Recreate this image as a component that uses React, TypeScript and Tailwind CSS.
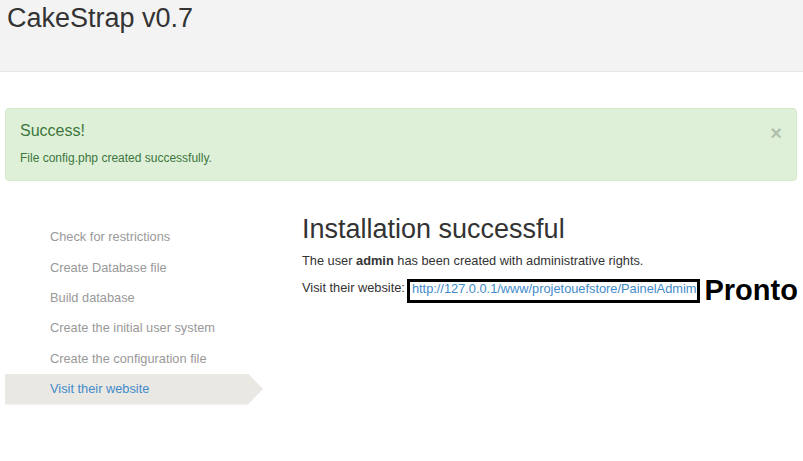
const steps = [
  "Check for restrictions",
  "Create Database file",
  "Build database",
  "Create the initial user system",
  "Create the configuration file",
  "Visit their website",
]

export default function App() {
  const active = steps.length - 1
  return (
    <div className="min-h-screen bg-white font-['Liberation_Sans',Arial,sans-serif] text-[#333]">
      <header className="h-[72px] border-b border-[#e5e5e5] bg-[#f3f3f3] px-[7px] pt-[4px]">
        <h1 className="text-[27px] font-normal leading-[1.1]">CakeStrap v0.7</h1>
      </header>

      <div className="ml-[5px] mr-[6px] mt-[36px] flex justify-between rounded-[4px] border border-[#d6e9c6] bg-[#dff0d8] px-[14px] pt-[13px] pb-[13px] text-[#3c763d]">
        <div>
          <h4 className="text-[16px] leading-[17.6px]">Success!</h4>
          <p className="mt-[10px] text-[12px] leading-[17px]">File config.php created successfully.</p>
        </div>
        <span className="mt-[1px] text-[20px] font-bold leading-none text-black opacity-20">×</span>
      </div>

      <div className="mt-[34px] flex">
        <ul className="ml-[5px] w-[258px] pt-[7px] text-[12.8px]">
          {steps.map((s, i) => (
            <li
              key={s}
              className={
                i === active
                  ? "flex h-[31px] items-center bg-[#eae8e3] pl-[45px] text-[#428bca] [clip-path:polygon(0_0,243px_0,100%_50%,243px_100%,0_100%)]"
                  : "flex h-[30.4px] items-center pl-[45px] text-[#999]"
              }
            >
              {s}
            </li>
          ))}
        </ul>

        <div className="ml-[39px]">
          <h2 className="text-[27px] font-normal leading-[1.1]">Installation successful</h2>
          <p className="mt-[8px] text-[12.8px] leading-[18px]">
            The user <b>admin</b> has been created with administrative rights.
          </p>
          <div className="mt-[8.3px] flex items-start text-[12.8px]">
            <span className="mt-[0.5px] leading-[18px]">Visit their website:</span>
            <a className="ml-[2px] border-[3px] border-black pb-[5px] pl-[2px] pr-[1px] leading-[13px] text-[#428bca]">
              http://127.0.0.1/www/projetouefstore/PainelAdmim
            </a>
            <span className="ml-[4px] mt-[-2.5px] text-[29px] font-bold leading-none text-black">Pronto</span>
          </div>
        </div>
      </div>
    </div>
  )
}
